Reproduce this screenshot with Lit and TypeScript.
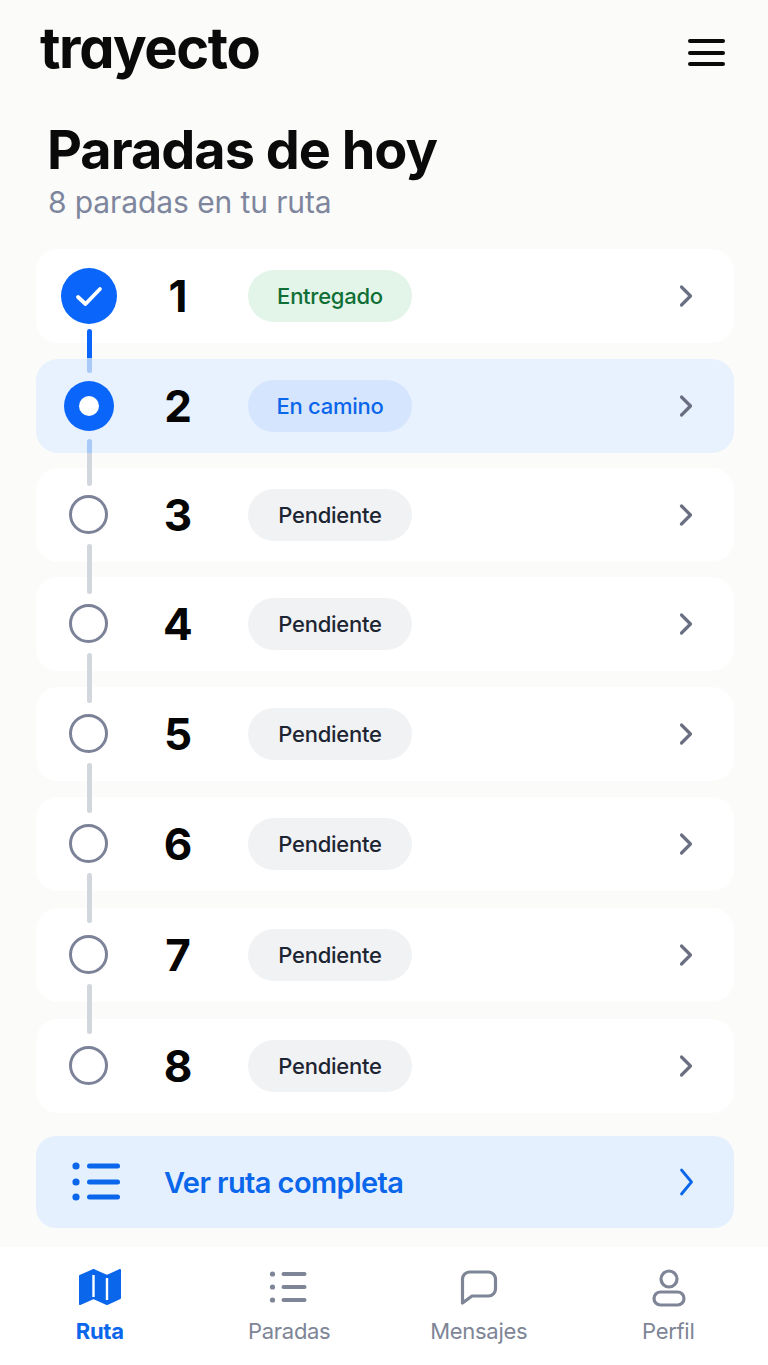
import { LitElement, html, css, svg } from 'lit';
import { customElement } from 'lit/decorators.js';

type Status = 'done' | 'active' | 'pending';

const STOPS: { n: number; status: Status; label: string; top: number }[] = [
  { n: 1, status: 'done', label: 'Entregado', top: 0 },
  { n: 2, status: 'active', label: 'En camino', top: 16 },
  { n: 3, status: 'pending', label: 'Pendiente', top: 15 },
  { n: 4, status: 'pending', label: 'Pendiente', top: 15 },
  { n: 5, status: 'pending', label: 'Pendiente', top: 16 },
  { n: 6, status: 'pending', label: 'Pendiente', top: 16 },
  { n: 7, status: 'pending', label: 'Pendiente', top: 17 },
  { n: 8, status: 'pending', label: 'Pendiente', top: 17 },
];

const chevron = svg`<path d="M7.5 3 16.5 12 7.5 21" fill="none" stroke="currentColor" stroke-width="3.2" stroke-linecap="round" stroke-linejoin="round"/>`;

@customElement('app-root')
export class AppRoot extends LitElement {
  static styles = css`
    :host {
      display: block;
      width: 768px;
      height: 1365px;
      overflow: hidden;
      background: #fbfbf9;
      font-family: Inter, "Liberation Sans", sans-serif;
      font-optical-sizing: none;
      color: #0a0a0a;
    }
    .top {
      display: flex;
      justify-content: space-between;
      align-items: flex-start;
      height: 112px;
      padding: 12px 43px 0 40px;
      box-sizing: border-box;
    }
    .logo {
      font-size: 56px;
      line-height: 72px;
      font-weight: 700;
      letter-spacing: -1.4px;
      font-feature-settings: "cv11" 1;
    }
    .menu {
      margin-top: 27px;
      display: flex;
      flex-direction: column;
      gap: 7.5px;
      width: 37px;
    }
    .menu span {
      height: 4px;
      border-radius: 2px;
      background: #0a0a0a;
    }
    .head {
      padding: 0 48px;
    }
    h1 {
      margin: 0 0 0 -1px;
      font-size: 54px;
      line-height: 76px;
      font-weight: 700;
      letter-spacing: -1px;
    }
    .sub {
      margin-top: -6px;
      font-size: 30px;
      line-height: 40px;
      letter-spacing: -0.1px;
      color: #7e869e;
    }
    .list {
      margin: 27px 34px 0 36px;
    }
    .row {
      position: relative;
      display: flex;
      align-items: center;
      height: 94px;
      border-radius: 22px;
      background: #fff;
    }
    .row.active {
      background: #e8f1fe;
    }
    .marker {
      width: 105px;
      display: flex;
      justify-content: center;
      flex: none;
    }
    .dot {
      box-sizing: border-box;
      border-radius: 50%;
      display: flex;
      align-items: center;
      justify-content: center;
    }
    .dot.done {
      width: 56px;
      height: 56px;
      background: #0a66fa;
    }
    .dot.active {
      width: 50px;
      height: 50px;
      background: #0a66fa;
    }
    .dot.active::after {
      content: "";
      width: 20px;
      height: 20px;
      border-radius: 50%;
      background: #fff;
    }
    .dot.pending {
      width: 39px;
      height: 39px;
      margin-top: -2px;
      border: 3.5px solid #7c8398;
      background: #fff;
    }
    .line {
      position: absolute;
      left: 51px;
      bottom: -32px;
      width: 4.5px;
      height: 50px;
      border-radius: 3px;
      background: #d2d6dd;
      z-index: 1;
    }
    .line.done {
      background: linear-gradient(#0a66fa 0 29px, #a9c9f8 29px);
      bottom: -30px;
      height: 44px;
    }
    .line.active {
      background: linear-gradient(#a9c9f8 0 14px, #d2d6dd 14px);
      bottom: -33px;
      height: 47px;
    }
    .num {
      width: 74px;
      text-align: center;
      font-size: 44px;
      font-weight: 700;
      color: #050505;
      flex: none;
    }
    .badge {
      margin-left: 33px;
      width: 164px;
      height: 52px;
      border-radius: 26px;
      display: flex;
      align-items: center;
      justify-content: center;
      font-size: 22px;
      font-weight: 450;
      letter-spacing: -0.25px;
      flex: none;
    }
    .badge.done {
      background: #e3f4e9;
      color: #0f6f35;
    }
    .badge.active {
      background: #d5e5fd;
      color: #0a66ea;
    }
    .badge.pending {
      background: #f1f2f4;
      color: #1e2532;
    }
    .go {
      margin-left: auto;
      margin-right: 36px;
      width: 24px;
      height: 24px;
      color: #6a7081;
    }
    .cta {
      margin: 23px 34px 0 36px;
      height: 92px;
      border-radius: 20px;
      background: #e5f0fe;
      display: flex;
      align-items: center;
      color: #0a66ea;
    }
    .cta .icon {
      margin-left: 35px;
      width: 50px;
      height: 40px;
    }
    .cta .label {
      margin-left: 43px;
      font-size: 29px;
      font-weight: 600;
      letter-spacing: -0.6px;
    }
    .cta .next {
      margin-left: auto;
      margin-right: 36px;
      width: 24px;
      height: 30px;
    }
    nav {
      margin-top: 19px;
      height: 118px;
      padding: 0 5px;
      background: #fff;
      display: grid;
      grid-template-columns: repeat(4, 1fr);
    }
    .tab {
      display: flex;
      flex-direction: column;
      align-items: center;
      padding-top: 17px;
      color: #7e8596;
      font-size: 22px;
      font-weight: 400;
    }
    .tab svg {
      width: 48px;
      height: 44px;
    }
    .tab span {
      margin-top: 9px;
      line-height: 28px;
      letter-spacing: -0.3px;
    }
    .tab.on {
      color: #0a66ea;
    }
    .tab.on span {
      font-weight: 700;
    }
  `;

  private renderMark(status: Status) {
    if (status === 'done') {
      return html`<div class="dot done">
        <svg width="28" height="28" viewBox="0 0 28 28">
          <path d="M3 15l7.5 7L25 7" fill="none" stroke="#fff" stroke-width="3.8" stroke-linecap="round" stroke-linejoin="round" />
        </svg>
      </div>`;
    }
    return html`<div class="dot ${status}"></div>`;
  }

  render() {
    return html`
      <div class="top">
        <div class="logo">trayecto</div>
        <div class="menu"><span></span><span></span><span></span></div>
      </div>
      <div class="head">
        <h1>Paradas de hoy</h1>
        <div class="sub">8 paradas en tu ruta</div>
      </div>
      <div class="list">
        ${STOPS.map(
          (s, i) => html`
            <div class="row ${s.status}" style="margin-top:${s.top}px">
              <div class="marker">${this.renderMark(s.status)}</div>
              <div class="num">${s.n}</div>
              <div class="badge ${s.status}">${s.label}</div>
              <svg class="go" viewBox="0 0 24 24">${chevron}</svg>
              ${i < STOPS.length - 1 ? html`<div class="line ${s.status}"></div>` : ''}
            </div>
          `
        )}
      </div>
      <div class="cta">
        <svg class="icon" viewBox="0 0 50 40">
          <g fill="#0a66ea">
            <circle cx="5" cy="4" r="3.6" /><circle cx="5" cy="20" r="3.6" /><circle cx="5" cy="35" r="3.6" />
            <rect x="16" y="1.5" width="33" height="5" rx="2.5" />
            <rect x="16" y="17.5" width="33" height="5" rx="2.5" />
            <rect x="16" y="32.5" width="33" height="5" rx="2.5" />
          </g>
        </svg>
        <div class="label">Ver ruta completa</div>
        <svg class="next" viewBox="0 0 24 30">
          <path d="M7.5 3 17.5 15 7.5 27" fill="none" stroke="currentColor" stroke-width="2.8" stroke-linecap="round" stroke-linejoin="round" />
        </svg>
      </div>
      <nav>
        <div class="tab on">
          <svg viewBox="0 0 48 44">
            <path fill="currentColor" stroke="currentColor" stroke-width="2" stroke-linejoin="round" d="M4 12 17.5 6 31 12 44 6V34L31 40 17.5 34 4 40Z" />
            <path stroke="#fff" stroke-width="2.4" d="M17.5 11V33M31 14V36" />
          </svg>
          <span>Ruta</span>
        </div>
        <div class="tab">
          <svg viewBox="0 0 48 44">
            <g fill="currentColor">
              <circle cx="7.5" cy="10" r="2.6" /><circle cx="7.5" cy="23" r="2.6" /><circle cx="7.5" cy="36" r="2.6" />
              <rect x="16.5" y="8" width="25" height="4" rx="2" />
              <rect x="16.5" y="21" width="25" height="4" rx="2" />
              <rect x="16.5" y="34" width="25" height="4" rx="2" />
            </g>
          </svg>
          <span>Paradas</span>
        </div>
        <div class="tab">
          <svg viewBox="0 0 48 44">
            <path fill="none" stroke="currentColor" stroke-width="3.2" stroke-linejoin="round" d="M7.5 15a7 7 0 0 1 7-7h19a7 7 0 0 1 7 7v10a7 7 0 0 1-7 7H17L7.5 39Z" />
          </svg>
          <span>Mensajes</span>
        </div>
        <div class="tab">
          <svg viewBox="0 0 48 44">
            <g fill="none" stroke="currentColor" stroke-width="3.2">
              <circle cx="25" cy="15" r="8" />
              <rect x="10" y="28" width="30" height="13" rx="6.5" />
            </g>
          </svg>
          <span>Perfil</span>
        </div>
      </nav>
    `;
  }
}
